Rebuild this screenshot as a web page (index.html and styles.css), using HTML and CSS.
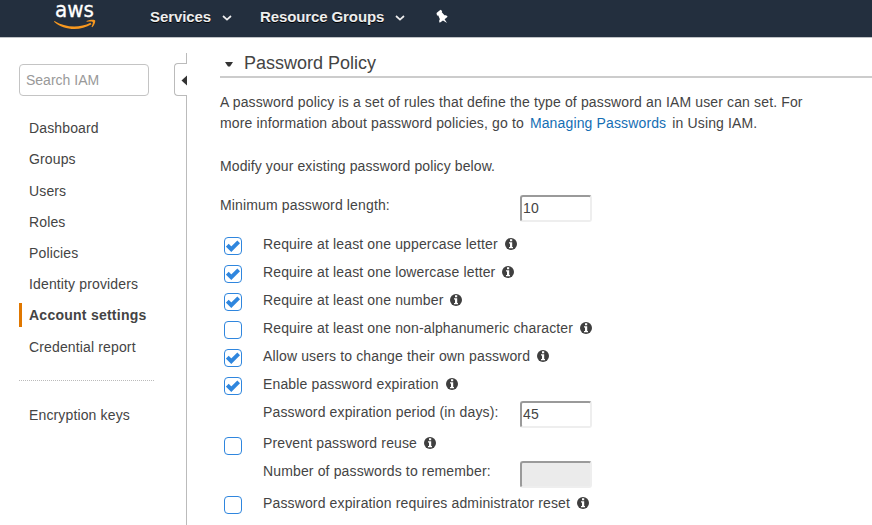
FILE: index.html
```html
<!DOCTYPE html>
<html lang="en">
<head>
<meta charset="utf-8">
<title>IAM Account Settings</title>
<link rel="stylesheet" href="styles.css">
</head>
<body>
<svg class="defs" width="0" height="0" aria-hidden="true">
  <symbol id="info" viewBox="0 0 12 12"><circle cx="6" cy="6" r="6" fill="#3f3f3f"/><path d="M5 1.300h2.200v2H5zM4 4.300h3.200V9H8v1.200H4V9h1V5.500H4z" fill="#fff"/></symbol>
  <symbol id="check" viewBox="0 0 14 12"><path d="M1.300 5.200L5.300 9.200L12.700 1.900" fill="none" stroke="#2f86de" stroke-width="3.900"/></symbol>
  <symbol id="chevron" viewBox="0 0 10 6"><path d="M1 1l4 3.600L9 1" fill="none" stroke="#eee" stroke-width="1.700"/></symbol>
</svg>
<header class="topbar">
  <svg class="logo" width="44" height="32" viewBox="0 0 44 32">
    <text class="logo-text" x="1" y="17" textLength="39" lengthAdjust="spacingAndGlyphs">aws</text>
    <path d="M0.500 21C11 27.500 25 28.500 36.500 22.800L37.500 24.300C26 31.500 10 30.500 0 21.800zM32.500 21C36 19.300 41 19.400 41.200 20.400C41.500 22 40.300 25.300 38.200 27.200L37.500 26.700C38.500 24.500 39.200 22.500 38.700 21.900C38 21.200 35 21.500 32.700 21.800z" fill="#f7981f"/>
  </svg>
  <nav class="menu">
    <a class="menu-item">Services<svg class="chevron"><use href="#chevron"/></svg></a>
    <a class="menu-item">Resource Groups<svg class="chevron"><use href="#chevron"/></svg></a>
    <svg class="pin" width="14" height="16" viewBox="0 0 14 16"><path d="M1.500 4L5.500 0.800L7.200 2L6.800 3.200L9.500 6.300C11 6 12.200 6.700 12.600 7.700L9.600 10.200L12 14L8 11.400L4.700 13.700C4 12.500 4 11.300 4.900 10.200L3.300 6.500L2 6.400z" fill="#fff"/></svg>
  </nav>
</header>
<div class="page">
  <aside class="sidebar">
    <input class="search" type="text" placeholder="Search IAM">
    <ul class="links">
      <li>Dashboard</li>
      <li>Groups</li>
      <li>Users</li>
      <li>Roles</li>
      <li>Policies</li>
      <li>Identity providers</li>
      <li class="active">Account settings</li>
      <li>Credential report</li>
    </ul>
    <ul class="links secondary">
      <li>Encryption keys</li>
    </ul>
    <div class="handle"><svg width="6" height="12" viewBox="0 0 6 12"><path d="M6 0.500v10L0.500 5.500z" fill="#333"/></svg></div>
  </aside>
  <main class="content">
    <h1 class="title"><svg width="8" height="5" viewBox="0 0 8 5"><path d="M0 0h8L5 4.500H3z" fill="#333"/></svg>Password Policy</h1>
    <p class="intro">A password policy is a set of rules that define the type of password an IAM user can set. For<br>more information about password policies, go to <a class="link">Managing Passwords</a> in Using IAM.</p>
    <p class="hint">Modify your existing password policy below.</p>
    <div class="length"><span class="length-label">Minimum password length:</span><input class="num" value="10"></div>
    <div class="row"><span class="box"><svg><use href="#check"/></svg></span><span class="label">Require at least one uppercase letter<svg class="info"><use href="#info"/></svg></span></div>
    <div class="row"><span class="box"><svg><use href="#check"/></svg></span><span class="label">Require at least one lowercase letter<svg class="info"><use href="#info"/></svg></span></div>
    <div class="row"><span class="box"><svg><use href="#check"/></svg></span><span class="label">Require at least one number<svg class="info"><use href="#info"/></svg></span></div>
    <div class="row"><span class="box"></span><span class="label">Require at least one non-alphanumeric character<svg class="info"><use href="#info"/></svg></span></div>
    <div class="row"><span class="box"><svg><use href="#check"/></svg></span><span class="label">Allow users to change their own password<svg class="info"><use href="#info"/></svg></span></div>
    <div class="row"><span class="box"><svg><use href="#check"/></svg></span><span class="label">Enable password expiration<svg class="info"><use href="#info"/></svg></span></div>
    <div class="row sub expiry"><span class="label">Password expiration period (in days):</span><input class="num" value="45"></div>
    <div class="row reuse"><span class="box"></span><span class="label">Prevent password reuse<svg class="info"><use href="#info"/></svg></span></div>
    <div class="row sub remember"><span class="label">Number of passwords to remember:</span><input class="num" disabled></div>
    <div class="row"><span class="box"></span><span class="label">Password expiration requires administrator reset<svg class="info"><use href="#info"/></svg></span></div>
  </main>
</div>
</body>
</html>
```
FILE: styles.css
```css
* { box-sizing: border-box; }
body {
  margin: 0;
  height: 525px;
  overflow: hidden;
  background: #fff;
  color: #444;
  font: 14px/21px "Liberation Sans", Arial, sans-serif;
  letter-spacing: .14px;
}
.defs { position: absolute; }
.topbar {
  display: flex;
  height: 38px;
  padding-left: 54px;
  background: #232f3e;
  border-bottom: 1px solid #bfc2c6;
}
.logo { flex: none; overflow: visible; }
.logo-text { font: 500 22px "DejaVu Sans", sans-serif; letter-spacing: 0; fill: #fff; stroke: #fff; stroke-width: .3px; }
.menu { display: flex; height: 32px; margin-left: 52px; align-items: center; }
.menu-item {
  display: flex;
  align-items: center;
  margin-right: 27px;
  color: #eee;
  font-size: 15px;
  font-weight: bold;
  letter-spacing: -.1px;
  text-shadow: 0 1px 0 #000;
}
.menu-item + .menu-item { margin-left: 1px; }
.chevron { width: 10px; height: 6px; margin: 4px 0 0 11px; }
.pin { margin: 2px 0 0 3px; }
.page { display: flex; height: 487px; }
.sidebar {
  position: relative;
  flex: none;
  width: 187px;
  height: 472px;
  margin-top: 15px;
  padding: 11px 0 0 19px;
  border-right: 1px solid #bbb;
}
.search {
  display: block;
  width: 130px;
  height: 32px;
  padding: 0 6px;
  border: 1px solid #c4c4c4;
  border-radius: 4px;
  font: inherit;
}
.search::placeholder { color: #999; opacity: 1; }
.links { width: 135px; margin: 0; padding: 17px 0; list-style: none; }
.links li { height: 31.250px; padding: 5px 0 0 10px; }
.links .active { position: relative; padding-top: 4px; font-weight: bold; letter-spacing: .25px; }
.active::before {
  content: "";
  position: absolute;
  left: 0;
  top: 2px;
  width: 3px;
  height: 24px;
  background: #e07700;
}
.secondary { padding-top: 19px; border-top: 1px dotted #bbb; }
.handle {
  position: absolute;
  top: 10px;
  right: -1px;
  display: flex;
  align-items: center;
  justify-content: flex-end;
  width: 13px;
  height: 33px;
  padding-top: 3px;
  background: #fff;
  border: 1px solid #bbb;
  border-right: 0;
  border-radius: 4px 0 0 4px;
}
.content { flex: 1; padding: 12px 0 0 33px; }
.title {
  display: flex;
  align-items: center;
  gap: 11px;
  height: 28px;
  margin: 0;
  padding: 0 0 0 5px;
  border-bottom: 2px solid #ccc;
  font-size: 18px;
  font-weight: normal;
  letter-spacing: 0;
}
.title svg { margin-top: 2px; }
.intro { margin: 14px 0 22px; white-space: nowrap; }
.link { margin: 0 2px; color: #146eb4; }
.hint { margin: 0 0 18px; letter-spacing: .1px; }
.length { display: flex; height: 35px; }
.length-label { width: 300px; }
.num {
  width: 72px;
  height: 27px;
  padding: 0 1px 2px;
  border: 2px solid #eee;
  border-color: #9a9a9a #eee #eee #9a9a9a;
  border-radius: 3px;
  background: #fff;
  color: #444;
  font: inherit;
  letter-spacing: .14px;
}
.num:disabled { background: #ebebeb; }
.row { display: flex; height: 28px; padding: 4px 0 0 4px; }
.box {
  width: 18px;
  height: 18px;
  margin: 3px 21px 0 0;
  padding: 2px 1px;
  border: 1px solid #2f86de;
  border-radius: 4px;
}
.box svg { display: block; width: 14px; height: 12px; }
.label { display: flex; }
.info { width: 12px; height: 12px; margin: 4px 0 0 7px; }
.sub { padding-left: 43px; }
.sub .label { width: 257px; }
.expiry { height: 31px; }
.expiry .num { margin-top: -1px; }
.reuse .box { margin-top: 4px; }
.remember { height: 32px; }
```
